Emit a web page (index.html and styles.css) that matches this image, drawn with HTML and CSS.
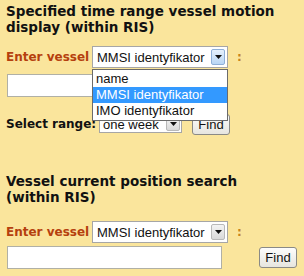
FILE: index.html
```html
<!DOCTYPE html>
<html>
<head>
<meta charset="utf-8">
<link rel="stylesheet" href="styles.css">
</head>
<body>
<div class="page">
  <section class="block">
    <h2 class="title">Specified time range vessel motion display (within RIS)</h2>
    <div class="row vessel-row">
      <span class="label">Enter vessel</span>
      <div class="select-wrap">
        <div class="select wide">
          <span class="select-text">MMSI identyfikator</span>
          <span class="arrow hot"><svg width="7" height="4" viewBox="0 0 7 4"><path d="M0 0h7L3.5 4z" fill="#111"/></svg></span>
        </div>
        <ul class="dropdown">
          <li>name</li>
          <li class="selected">MMSI identyfikator</li>
          <li>IMO identyfikator</li>
        </ul>
      </div>
      <span class="colon">:</span>
    </div>
    <div class="input short"></div>
    <div class="row range-row">
      <span class="label dark">Select range:</span>
      <div class="select narrow">
        <span class="select-text">one week</span>
        <span class="arrow"><svg width="7" height="4" viewBox="0 0 7 4"><path d="M0 0h7L3.5 4z" fill="#111"/></svg></span>
      </div>
      <button class="btn">Find</button>
    </div>
  </section>

  <section class="block second">
    <h2 class="title">Vessel current position search (within RIS)</h2>
    <div class="row vessel-row">
      <span class="label">Enter vessel</span>
      <div class="select wide">
        <span class="select-text">MMSI identyfikator</span>
        <span class="arrow"><svg width="7" height="4" viewBox="0 0 7 4"><path d="M0 0h7L3.5 4z" fill="#111"/></svg></span>
      </div>
      <span class="colon">:</span>
    </div>
    <div class="row find-row">
      <div class="input long"></div>
      <button class="btn">Find</button>
    </div>
  </section>
</div>
</body>
</html>
```

FILE: styles.css
```css
html, body {
  margin: 0;
  padding: 0;
  background: #fae59c;
}
.page {
  width: 304px;
  height: 276px;
  padding: 3px 0 0 6px;
  box-sizing: border-box;
  overflow: hidden;
}
.title {
  margin: 0;
  font-family: "DejaVu Sans", Verdana, sans-serif;
  font-weight: bold;
  font-size: 13.5px;
  line-height: 16px;
  color: #111;
  width: 280px;
}
.row {
  display: flex;
  align-items: center;
}
.vessel-row {
  margin-top: 11px;
  height: 22px;
}
.label {
  flex: none;
  white-space: nowrap;
  font-family: "DejaVu Sans", Verdana, sans-serif;
  font-weight: bold;
  font-size: 12px;
  color: #b5400e;
  width: 86px;
}
.label.dark {
  color: #111;
  width: 93px;
}
.select-wrap {
  position: relative;
  flex: none;
}
.select {
  flex: none;
  display: flex;
  align-items: center;
  justify-content: space-between;
  box-sizing: border-box;
  background: #fff;
  border: 1px solid #a6a6a6;
  font-family: "Liberation Sans", Arial, sans-serif;
  font-size: 13px;
  color: #111;
}
.select.wide {
  width: 136px;
  height: 22px;
  padding: 0 2px 0 4px;
}
.select.narrow {
  width: 83px;
  height: 18px;
  padding: 0 1px 0 3px;
  white-space: nowrap;
}
.select-text {
  white-space: nowrap;
  overflow: hidden;
}
.arrow {
  flex: none;
  display: flex;
  align-items: center;
  justify-content: center;
  box-sizing: border-box;
  width: 14px;
  height: 16px;
  border: 1px solid #b9b9b9;
  border-radius: 2px;
  background: linear-gradient(#f4f4f4, #d9d9d9);
}
.select.narrow .arrow {
  height: 14px;
  width: 14px;
}
.arrow.hot {
  border-color: #8fb0d8;
  background: linear-gradient(#e6f1fc, #b9d6f5);
}
.colon {
  flex: none;
  margin-left: 9px;
  font-family: "DejaVu Sans", Verdana, sans-serif;
  font-weight: bold;
  font-size: 12px;
  color: #c8851c;
}
.dropdown {
  position: absolute;
  top: 23px;
  left: 0;
  width: 136px;
  box-sizing: border-box;
  margin: 0;
  padding: 1px 0;
  list-style: none;
  background: #fff;
  border: 1px solid #6b6b6b;
  font-family: "Liberation Sans", Arial, sans-serif;
  font-size: 13px;
  color: #111;
  z-index: 2;
}
.dropdown li {
  height: 16px;
  line-height: 16px;
  padding-left: 3px;
}
.dropdown li.selected {
  background: #3399ff;
  color: #fff;
}
.input {
  flex: none;
  box-sizing: border-box;
  height: 23px;
  background: #fff;
  border: 1px solid #b0b0a6;
}
.input.short {
  margin: 6px 0 0 1px;
  width: 90px;
}
.range-row {
  margin-top: 17px;
  height: 20px;
}
.btn {
  flex: none;
  box-sizing: border-box;
  width: 38px;
  height: 21px;
  padding: 0;
  border: 1px solid #8a8a86;
  border-radius: 3px;
  background: linear-gradient(#fdfdfc, #e6e5df);
  font-family: "Liberation Sans", Arial, sans-serif;
  font-size: 13px;
  color: #111;
}
.range-row .btn {
  margin-left: 10px;
}
.second {
  margin-top: 39px;
}
.second .vessel-row {
  margin-top: 16px;
}
.find-row {
  margin-top: 3px;
  align-items: flex-start;
}
.input.long {
  margin-left: 1px;
  width: 215px;
}
.find-row .btn {
  margin-left: 37px;
  margin-top: 1px;
}
```
